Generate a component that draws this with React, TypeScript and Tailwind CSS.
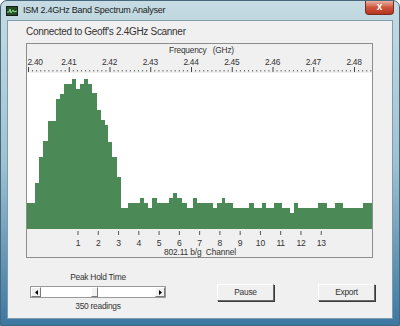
import React from "react";

const steps: [number, number][] = [
  [27, 203], [35, 183], [39, 157], [43, 141], [48, 121], [56, 99], [60, 94], [64, 84], [72, 79], [76, 89],
  [80, 84], [84, 79], [88, 84], [92, 93], [97, 110], [101, 120], [105, 125], [108, 142], [112, 157], [117, 177],
  [121, 208], [128, 203], [140, 198], [144, 203], [148, 208], [152, 198], [157, 203], [169, 198], [173, 193],
  [177, 198], [182, 203], [187, 208], [193, 198], [197, 203], [213, 208], [217, 203], [222, 198], [225, 203],
  [233, 208], [249, 203], [254, 208], [262, 203], [266, 208], [274, 203], [282, 208], [290, 213], [294, 203],
  [298, 208], [318, 203], [327, 208], [335, 203], [343, 208], [363, 203], [372, 0],
];

function plotPoints() {
  const pts: string[] = ["0,156"];
  for (let i = 0; i < steps.length - 1; i++) {
    const [x0, t] = steps[i];
    const x1 = steps[i + 1][0];
    pts.push(`${x0 - 27},${t - 73}`, `${x1 - 27},${t - 73}`);
  }
  pts.push("345,156");
  return pts.join(" ");
}

const freqs = ["2.40", "2.41", "2.42", "2.43", "2.44", "2.45", "2.46", "2.47", "2.48"];
const FF = "Liberation Sans, Arial, sans-serif";

function Header() {
  const ticks = [];
  for (let j = 0; j <= 84; j++) {
    const x = 1 + 4.075 * j;
    if (j % 10 === 0) ticks.push(<rect key={j} x={x} y={23} width={1} height={5} fill="#444" />);
    else ticks.push(<rect key={j} x={x} y={26} width={1} height={1.5} fill="#666" />);
  }
  return (
    <div className="h-[29px] bg-[#f0f0f0] flex flex-col">
      <div className="h-[12px] pt-[1px] pl-[4px] text-center text-[8.3px] tracking-[-0.2px] leading-[10px] text-[#333]">
        Frequency&nbsp;&nbsp;&nbsp;(GHz)
      </div>
      <svg width="345" height="17" viewBox="0 12 345 17" className="block">
        {freqs.map((f, i) =>
          i === 0 ? (
            <text key={f} x={0.5} y={21} fontSize="8.4" letterSpacing="-0.3" fill="#333" fontFamily={FF}>{f}</text>
          ) : (
            <text key={f} x={1 + 40.75 * i} y={21} fontSize="8.4" letterSpacing="-0.3" fill="#333" textAnchor="middle" fontFamily={FF}>{f}</text>
          )
        )}
        {ticks}
      </svg>
    </div>
  );
}

function Footer() {
  const chans = Array.from({ length: 13 }, (_, i) => i + 1);
  return (
    <div className="h-[28px] bg-[#f0f0f0]">
      <svg width="345" height="28" className="block">
        {chans.map((n) => {
          const x = 50.5 + 20.27 * (n - 1);
          return (
            <g key={n}>
              <rect x={x} y={2} width={1} height={4} fill="#555" />
              <text x={x + 0.5} y={17} fontSize="8.6" letterSpacing="-0.2" fill="#333" textAnchor="middle" fontFamily={FF}>{n}</text>
            </g>
          );
        })}
        <text x={173} y={26} fontSize="8.4" letterSpacing="-0.15" fill="#333" textAnchor="middle" fontFamily={FF} xmlSpace="preserve">802.11 b/g  Channel</text>
      </svg>
    </div>
  );
}

function Button({ label }: { label: string }) {
  return (
    <div className="w-[57px] h-[17px] bg-[#f0f0f0] border border-t-[#ffffff] border-l-[#ffffff] border-r-[#6a6a6a] border-b-[#6a6a6a] shadow-[1px_1px_0_#3a3a3a] flex items-center justify-center text-[8.4px] tracking-[-0.25px] text-[#333]">
      {label}
    </div>
  );
}

export default function App() {
  return (
    <div className="w-[400px] h-[326px] overflow-hidden rounded-t-[7px] border border-[#46677c] bg-linear-to-b from-[#c6dbe3] via-[#9ec2d1] to-[#3b78a2] font-['Liberation_Sans',Arial,sans-serif] flex flex-col">
      <div className="h-[19px] flex items-start">
        <div className="ml-[5px] mt-[5px] w-[12px] h-[10px] border border-[#1b1b1b] bg-[#1f4d24] flex items-center justify-center">
          <svg width="10" height="8" viewBox="0 0 10 8">
            <polyline points="0,5 2,5 3,2 4,6 6,3 7,5 10,4" fill="none" stroke="#8fe08f" strokeWidth="1" />
          </svg>
        </div>
        <div className="ml-[5px] mt-[4px] text-[9px] tracking-[-0.25px] leading-[11px] text-[#1a1a1a]">ISM 2.4GHz Band Spectrum Analyser</div>
        <div className="ml-auto mr-[5px] w-[29px] h-[14px] rounded-b-[4px] border border-t-0 border-[#7a2c1e] bg-linear-to-b from-[#e8b0a2] via-[#cc543d] to-[#b8341d] flex items-center justify-center text-white text-[10px] font-bold leading-none pb-[1px]">
          x
        </div>
      </div>
      <div className="mx-[6px] h-[299px] border border-[#7e9cae] bg-[#f0f0f0] flex flex-col">
        <div className="ml-[18px] mt-[5px] h-[12px] text-[10px] tracking-[-0.3px] leading-[12px] text-[#333]">
          Connected to Geoff's 2.4GHz Scanner
        </div>
        <div className="ml-[18px] mt-[5px] w-[347px] h-[215px] border border-[#8d8d8d] flex flex-col">
          <Header />
          <div className="h-[156px] bg-white">
            <svg width="345" height="156" className="block">
              <polygon points={plotPoints()} fill="#4b8a57" />
            </svg>
          </div>
          <Footer />
        </div>
        <div className="flex items-start">
          <div className="ml-[22px] w-[136px] flex flex-col items-center">
            <div className="mt-[13px] h-[12px] text-[8.4px] tracking-[-0.25px] leading-[12px] text-[#333]">Peak Hold Time</div>
            <div className="mt-[3px] w-[136px] h-[12px] border border-[#9a9a9a] bg-white flex">
              <div className="w-[10px] h-full bg-[#f0f0f0] border border-t-white border-l-white border-r-[#7a7a7a] border-b-[#7a7a7a] flex items-center justify-center">
                <svg width="3" height="5" viewBox="0 0 3 5"><polygon points="3,0 0,2.5 3,5" fill="#000" /></svg>
              </div>
              <div className="w-[50px]" />
              <div className="w-[7px] h-full bg-[#f4f4f4] border border-t-white border-l-white border-r-[#7a7a7a] border-b-[#7a7a7a]" />
              <div className="flex-1" />
              <div className="w-[10px] h-full bg-[#f0f0f0] border border-t-white border-l-white border-r-[#7a7a7a] border-b-[#7a7a7a] flex items-center justify-center">
                <svg width="3" height="5" viewBox="0 0 3 5"><polygon points="0,0 3,2.5 0,5" fill="#000" /></svg>
              </div>
            </div>
            <div className="mt-[2px] h-[12px] text-[8.4px] tracking-[-0.25px] leading-[12px] text-[#333]">350 readings</div>
          </div>
          <div className="ml-[51px] mt-[26px]">
            <Button label="Pause" />
          </div>
          <div className="ml-[44px] mt-[26px]">
            <Button label="Export" />
          </div>
        </div>
      </div>
    </div>
  );
}
